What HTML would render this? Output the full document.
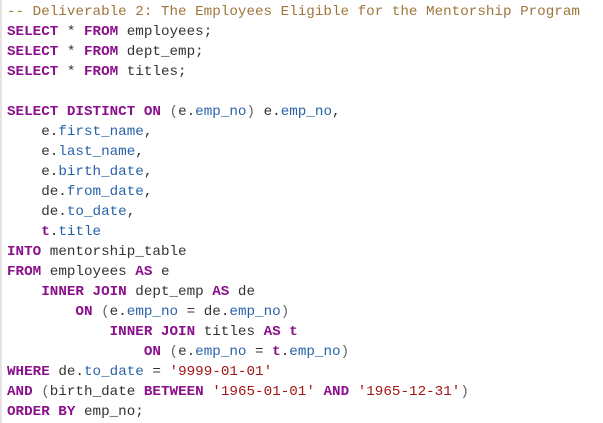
<!DOCTYPE html>
<html><head><style>
html,body{margin:0;padding:0;background:#fff;width:603px;height:423px;overflow:hidden}
.b{position:absolute;left:0;top:0;width:2px;height:423px;background:#e4e4e4}
pre{position:absolute;left:7px;top:2px;margin:0;font-family:"Liberation Mono",monospace;font-size:14.25px;line-height:20px;color:#333}
.c{color:#a0753c}.k{color:#8b0f8b;font-weight:bold}.f{color:#2a62a8}.s{color:#a31515}.p{color:#666}
</style></head><body><div class="b"></div>
<pre><span class="c">-- Deliverable 2: The Employees Eligible for the Mentorship Program</span>
<span class="k">SELECT</span> * <span class="k">FROM</span> employees;
<span class="k">SELECT</span> * <span class="k">FROM</span> dept_emp;
<span class="k">SELECT</span> * <span class="k">FROM</span> titles;

<span class="k">SELECT DISTINCT ON</span> <span class="p">(</span>e.<span class="f">emp_no</span><span class="p">)</span> e.<span class="f">emp_no</span>,
    e.<span class="f">first_name</span>,
    e.<span class="f">last_name</span>,
    e.<span class="f">birth_date</span>,
    de.<span class="f">from_date</span>,
    de.<span class="f">to_date</span>,
    <span class="k">t</span>.<span class="f">title</span>
<span class="k">INTO</span> mentorship_table
<span class="k">FROM</span> employees <span class="k">AS</span> e
    <span class="k">INNER JOIN</span> dept_emp <span class="k">AS</span> de
        <span class="k">ON</span> <span class="p">(</span>e.<span class="f">emp_no</span> = de.<span class="f">emp_no</span><span class="p">)</span>
            <span class="k">INNER JOIN</span> titles <span class="k">AS</span> <span class="k">t</span>
                <span class="k">ON</span> <span class="p">(</span>e.<span class="f">emp_no</span> = <span class="k">t</span>.<span class="f">emp_no</span><span class="p">)</span>
<span class="k">WHERE</span> de.<span class="f">to_date</span> = <span class="s">'9999-01-01'</span>
<span class="k">AND</span> <span class="p">(</span>birth_date <span class="k">BETWEEN</span> <span class="s">'1965-01-01'</span> <span class="k">AND</span> <span class="s">'1965-12-31'</span><span class="p">)</span>
<span class="k">ORDER BY</span> emp_no;</pre>
</body></html>
